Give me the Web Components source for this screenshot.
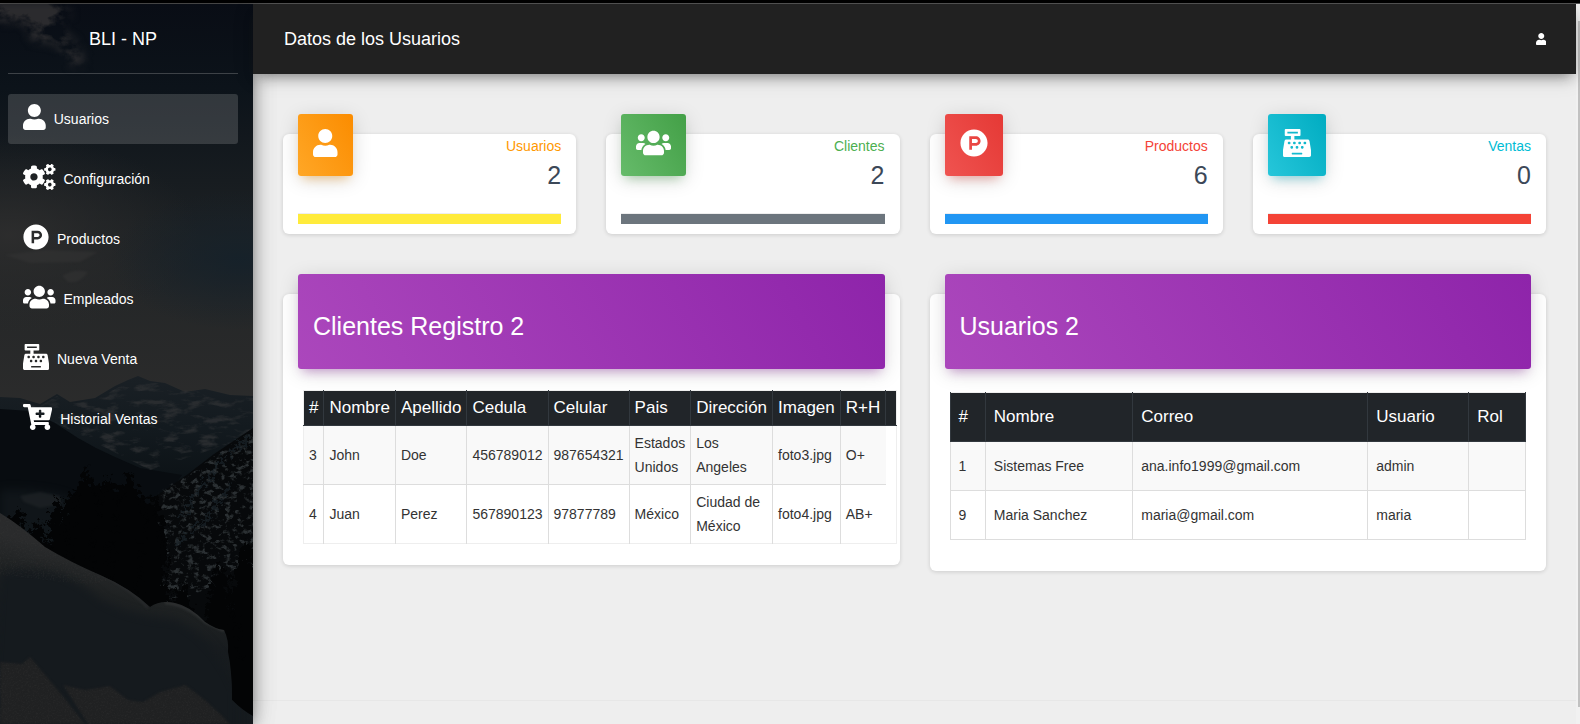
<!DOCTYPE html>
<html lang="es">
<head>
<meta charset="utf-8">
<title>Datos de los Usuarios</title>
<style>
  html, body { margin: 0; }
  body { font-family: "Liberation Sans", Arial, sans-serif; font-size: 14px; background: #eee; color: #333; }
</style>
</head>
<body>
<admin-shell>
  <side-bar slot="side" brand="BLI - NP">
    <nav-link icon="user" active>Usuarios</nav-link>
    <nav-link icon="cogs">Configuración</nav-link>
    <nav-link icon="product">Productos</nav-link>
    <nav-link icon="users">Empleados</nav-link>
    <nav-link icon="register">Nueva Venta</nav-link>
    <nav-link icon="cart">Historial Ventas</nav-link>
  </side-bar>
  <top-bar slot="top">Datos de los Usuarios</top-bar>
  <card-row columns="4">
    <stat-card icon="user" tone="orange" label="Usuarios" bar="#ffeb3b">2</stat-card>
    <stat-card icon="users" tone="green" label="Clientes" bar="#6c757d">2</stat-card>
    <stat-card icon="product" tone="red" label="Productos" bar="#2196f3">6</stat-card>
    <stat-card icon="register" tone="cyan" label="Ventas" bar="#f44336">0</stat-card>
  </card-row>
  <card-row columns="2">
    <panel-card heading="Clientes Registro 2"><clients-table></clients-table></panel-card>
    <panel-card heading="Usuarios 2"><users-table></users-table></panel-card>
  </card-row>
</admin-shell>

<script>
const GEAR = 'M512.1 191l-8.2 14.3c-3 5.3-9.4 7.5-15.1 5.4-11.8-4.4-22.6-10.7-32.1-18.6-4.6-3.8-5.8-10.5-2.8-15.7l8.2-14.3c-6.9-8-12.3-17.3-15.9-27.4h-16.5c-6 0-11.2-4.3-12.2-10.3-2-12-2.1-24.6 0-37.1 1-6 6.2-10.4 12.2-10.4h16.5c3.6-10.1 9-19.4 15.9-27.4l-8.2-14.3c-3-5.2-1.9-11.9 2.8-15.7 9.5-7.9 20.4-14.2 32.1-18.6 5.7-2.1 12.1.1 15.1 5.4l8.2 14.3c10.5-1.9 21.2-1.9 31.7 0L552 6.3c3-5.3 9.4-7.5 15.1-5.4 11.8 4.4 22.6 10.7 32.1 18.6 4.6 3.8 5.8 10.5 2.8 15.7l-8.2 14.3c6.9 8 12.3 17.3 15.9 27.4h16.5c6 0 11.2 4.3 12.2 10.3 2 12 2.1 24.6 0 37.1-1 6-6.2 10.4-12.2 10.4h-16.5c-3.6 10.1-9 19.4-15.9 27.4l8.2 14.3c3 5.2 1.9 11.9-2.8 15.7-9.5 7.9-20.4 14.2-32.1 18.6-5.7 2.1-12.1-.1-15.1-5.4l-8.2-14.3c-10.4 1.9-21.2 1.9-31.7 0zm-10.5-58.8c38.5 29.6 82.4-14.3 52.8-52.8-38.5-29.7-82.4 14.3-52.8 52.8z';
const ICONS = {
  user: [448, '<path d="M224 256c70.7 0 128-57.3 128-128S294.7 0 224 0 96 57.3 96 128s57.3 128 128 128zm89.6 32h-16.7c-22.2 10.2-46.9 16-72.9 16s-50.6-5.8-72.9-16h-16.7C60.2 288 0 348.2 0 422.4V464c0 26.5 21.5 48 48 48h352c26.5 0 48-21.5 48-48v-41.6c0-74.2-60.2-134.4-134.4-134.4z"/>'],
  users: [640, '<path d="M96 224c35.3 0 64-28.7 64-64s-28.7-64-64-64-64 28.7-64 64 28.7 64 64 64zm448 0c35.3 0 64-28.7 64-64s-28.7-64-64-64-64 28.7-64 64 28.7 64 64 64zm32 32h-64c-17.6 0-33.5 7.1-45.1 18.6 40.3 22.1 68.9 62 75.1 109.4h66c17.7 0 32-14.3 32-32v-32c0-35.3-28.7-64-64-64zm-256 0c61.9 0 112-50.1 112-112S381.9 32 320 32 208 82.1 208 144s50.1 112 112 112zm76.8 32h-8.3c-20.8 10-43.9 16-68.5 16s-47.6-6-68.5-16h-8.3C179.6 288 128 339.6 128 403.2V432c0 26.5 21.5 48 48 48h288c26.5 0 48-21.5 48-48v-28.8c0-63.6-51.6-115.2-115.2-115.2zm-223.7-13.4C161.5 263.1 145.6 256 128 256H64c-35.3 0-64 28.7-64 64v32c0 17.7 14.3 32 32 32h65.9c6.3-47.4 34.9-87.3 75.2-109.4z"/>'],
  cogs: [640, `<path d="${GEAR}"/><path transform="translate(0 299)" d="${GEAR}"/><path d="M386.3 286.1l33.7 16.8c10.1 5.8 14.5 18.1 10.5 29.1-8.9 24.2-26.4 46.4-42.6 65.8-7.4 8.9-20.2 11.1-30.3 5.3l-29.1-16.8c-16 13.7-34.6 24.6-54.9 31.7v33.6c0 11.6-8.3 21.6-19.7 23.6-24.6 4.2-50.4 4.4-75.9 0-11.5-2-20-11.9-20-23.6V418c-20.3-7.2-38.9-18-54.9-31.7L74 403c-10 5.8-22.9 3.6-30.3-5.3-16.2-19.4-33.3-41.6-42.2-65.7-4-10.9.4-23.2 10.5-29.1l33.3-16.8c-3.9-20.9-3.9-42.4 0-63.4L12 205.8c-10.1-5.8-14.6-18.1-10.5-29 8.9-24.2 26-46.4 42.2-65.8 7.4-8.9 20.2-11.1 30.3-5.3l29.1 16.8c16-13.7 34.6-24.6 54.9-31.7V57.1c0-11.5 8.2-21.5 19.6-23.5 24.6-4.2 50.5-4.4 76-.1 11.5 2 20 11.9 20 23.6v33.6c20.3 7.2 38.9 18 54.9 31.7l29.1-16.8c10-5.8 22.9-3.6 30.3 5.3 16.2 19.4 33.2 41.6 42.1 65.8 4 10.9.1 23.2-10 29.1l-33.7 16.8c3.9 21 3.9 42.5 0 63.5zm-117.6 21.1c59.2-77-28.7-164.9-105.7-105.7-59.2 77 28.7 164.9 105.7 105.7z"/>`],
  product: [512, '<path d="M326.3 218.8c0 20.5-16.7 37.2-37.2 37.2h-70.3v-74.4h70.3c20.5 0 37.2 16.7 37.2 37.2zM504 256c0 137-111 248-248 248S8 393 8 256 119 8 256 8s248 111 248 248zm-128.1-37.2c0-47.9-38.9-86.8-86.8-86.8H169.2v248h49.6v-74.4h70.3c47.9 0 86.8-38.9 86.8-86.8z"/>'],
  register: [512, '<path d="M511.1 378.8l-26.7-160c-2.6-15.4-15.9-26.7-31.6-26.7H208v-64h96c8.8 0 16-7.2 16-16V16c0-8.8-7.2-16-16-16H48c-8.8 0-16 7.2-16 16v96c0 8.8 7.2 16 16 16h96v64H59.1c-15.6 0-29 11.3-31.6 26.7L.8 378.7c-.6 3.5-.9 7-.9 10.5V480c0 17.7 14.3 32 32 32h448c17.7 0 32-14.3 32-32v-90.7c.1-3.5-.2-7-.8-10.5zM280 248c0-8.8 7.2-16 16-16h16c8.8 0 16 7.2 16 16v16c0 8.8-7.2 16-16 16h-16c-8.8 0-16-7.2-16-16v-16zm-32 64h16c8.8 0 16 7.2 16 16v16c0 8.8-7.2 16-16 16h-16c-8.8 0-16-7.2-16-16v-16c0-8.8 7.2-16 16-16zm-32-80c8.8 0 16 7.2 16 16v16c0 8.8-7.2 16-16 16h-16c-8.8 0-16-7.2-16-16v-16c0-8.8 7.2-16 16-16h16zM80 80V48h192v32H80zm40 200h-16c-8.8 0-16-7.2-16-16v-16c0-8.8 7.2-16 16-16h16c8.8 0 16 7.2 16 16v16c0 8.8-7.2 16-16 16zm16 64v-16c0-8.8 7.2-16 16-16h16c8.8 0 16 7.2 16 16v16c0 8.8-7.2 16-16 16h-16c-8.8 0-16-7.2-16-16zm216 112c0 4.4-3.6 8-8 8H168c-4.4 0-8-3.6-8-8v-16c0-4.4 3.6-8 8-8h176c4.4 0 8 3.6 8 8v16zm24-112c0 8.8-7.2 16-16 16h-16c-8.8 0-16-7.2-16-16v-16c0-8.8 7.2-16 16-16h16c8.8 0 16 7.2 16 16v16zm48-80c0 8.8-7.2 16-16 16h-16c-8.8 0-16-7.2-16-16v-16c0-8.8 7.2-16 16-16h16c8.8 0 16 7.2 16 16v16z"/>'],
  cart: [576, '<path d="M504.717 320H211.572l6.545 32h268.418c15.401 0 26.816 14.301 23.403 29.319l-5.517 24.276C523.112 414.668 536 433.828 536 456c0 31.202-25.519 56.444-56.824 55.994-29.823-.429-54.35-24.631-55.155-54.447-.44-16.287 6.085-31.049 16.803-41.548H231.176C241.553 426.165 248 440.326 248 456c0 31.813-26.528 57.431-58.67 55.938-28.54-1.325-51.751-24.385-53.251-52.917-1.158-22.034 10.436-41.455 28.051-51.586L93.883 64H24C10.745 64 0 53.255 0 40V24C0 10.745 10.745 0 24 0h102.529c11.401 0 21.228 8.021 23.513 19.19L159.208 64H551.99c15.401 0 26.816 14.301 23.403 29.319l-47.273 208C525.637 312.246 515.923 320 504.717 320zM408 168h-48v-40c0-8.837-7.163-16-16-16h-16c-8.837 0-16 7.163-16 16v40h-48c-8.837 0-16 7.163-16 16v16c0 8.837 7.163 16 16 16h48v40c0 8.837 7.163 16 16 16h16c8.837 0 16-7.163 16-16v-40h48c8.837 0 16-7.163 16-16v-16c0-8.837-7.163-16-16-16z"/>']
};
const icon = name => `<svg class="icon" viewBox="0 0 ${ICONS[name][0]} 512" fill="currentColor" aria-hidden="true">${ICONS[name][1]}</svg>`;

// Builds a conifer outline: a jagged triangle from the tip down to its base.
const tree = (x, top, base, half) => {
  const steps = 9, right = [], left = [];
  for (let i = 1; i <= steps; i++) {
    const y = top + (base - top) * i / steps, w = half * Math.pow(i / steps, .7);
    const j = (i * 7 + x) % 5 - 2;
    right.push(`${x + w + j},${y}`, `${x + w * .6},${y - 2}`);
    left.unshift(`${x - w * .6},${y - 2}`, `${x - w + j},${y}`);
  }
  return `<polygon points="${x},${top} ${right.join(' ')} ${left.join(' ')}"/>`;
};

const define = (tag, render) => customElements.define(tag, class extends HTMLElement {
  connectedCallback() {
    if (this.shadowRoot) return;
    this.attachShadow({ mode: 'open' }).innerHTML = render(this);
  }
});

define('admin-shell', () => `
  <style>
    :host { display: flex; flex-direction: column; min-height: 100vh; }
    .strip { height: 3px; background: #000; border-bottom: 1px solid #555; }
    .frame { flex: 1; display: flex; }
    slot[name=side] { display: contents; }
    .page { flex: 1; min-width: 0; display: flex; flex-direction: column; }
    main { flex: 1; display: flex; flex-direction: column; gap: 60px; padding: 60px 30px 0; }
    footer { height: 23px; border-top: 1px solid #e7e7e7; }
    .track { width: 4px; background: #f1f1f1; display: flex; flex-direction: column; box-sizing: border-box; padding: 17px 0 17px 2px; }
    .thumb { flex: 1; background: #c1c1c1; }
  </style>
  <div class="strip"></div>
  <div class="frame">
    <slot name="side"></slot>
    <div class="page">
      <slot name="top"></slot>
      <main><slot></slot></main>
      <footer></footer>
    </div>
    <div class="track"><div class="thumb"></div></div>
  </div>`);

define('side-bar', el => `
  <style>
    :host { display: block; position: relative; z-index: 3; width: 253px; flex: none; background: #111; color: #fff;
      box-shadow: 0 10px 30px -12px rgba(0,0,0,.42), 0 4px 25px 0 rgba(0,0,0,.12), 0 8px 10px -5px rgba(0,0,0,.2), 0 0 14px rgba(0,0,0,.25); }
    .scene { position: absolute; inset: 0; width: 100%; height: 100%; }
    .scene filter { color-interpolation-filters: sRGB; }
    .content { position: relative; padding: 0 15px 0 8px; }
    .brand { border-bottom: 1px solid rgba(180,180,180,.3); text-align: center; font-size: 18px; line-height: 30px; padding: 20px 0 19px; }
    nav { display: flex; flex-direction: column; gap: 10px; padding-top: 20px; }
  </style>
  <svg class="scene" viewBox="0 4 253 720" preserveAspectRatio="xMidYMid slice" aria-hidden="true">
    <defs>
      <linearGradient id="sky" x1="0" y1="0" x2="0" y2="1">
        <stop offset="0" stop-color="#090d15"/><stop offset=".2" stop-color="#0c131a"/><stop offset=".42" stop-color="#171c20"/>
        <stop offset=".7" stop-color="#252728"/><stop offset="1" stop-color="#2c2c2c"/>
      </linearGradient>
      <radialGradient id="warm"><stop offset="0" stop-color="#2e2e2e" stop-opacity=".9"/><stop offset="1" stop-color="#2a2a2a" stop-opacity="0"/></radialGradient>
      <radialGradient id="cool"><stop offset="0" stop-color="#15212a" stop-opacity=".9"/><stop offset="1" stop-color="#15212a" stop-opacity="0"/></radialGradient>
      <linearGradient id="hill" gradientUnits="userSpaceOnUse" x1="90" y1="555" x2="50" y2="724"><stop offset="0" stop-color="#2a2b2c"/><stop offset=".2" stop-color="#1e2122"/><stop offset=".35" stop-color="#181c1f"/><stop offset="1" stop-color="#13191d"/></linearGradient>
      <linearGradient id="range" gradientUnits="userSpaceOnUse" x1="0" y1="376" x2="0" y2="480"><stop offset="0" stop-color="#1a2025"/><stop offset=".5" stop-color="#131a1f"/><stop offset="1" stop-color="#0c1216"/></linearGradient>
      <filter id="soft" x="-50%" y="-50%" width="200%" height="200%"><feGaussianBlur stdDeviation="5"/></filter>
      <filter id="edge"><feGaussianBlur stdDeviation="1"/></filter>
      <filter id="cloud" x="-20%" y="-20%" width="140%" height="140%"><feGaussianBlur in="SourceGraphic" stdDeviation="5" result="m"/><feTurbulence type="fractalNoise" baseFrequency=".04 .05" numOctaves="5" seed="8"/><feColorMatrix values="0 0 0 0 .17  0 0 0 0 .17  0 0 0 0 .18  4.5 0 0 0 -1.6"/><feComposite in2="m" operator="in"/></filter>
      <filter id="rock" x="0" y="0" width="1" height="1"><feTurbulence type="fractalNoise" baseFrequency=".16 .2" numOctaves="5" seed="5" result="n"/><feColorMatrix values="0 0 0 0 .17  0 0 0 0 .19  0 0 0 0 .2  5 0 0 0 -2.6"/><feComposite in2="SourceGraphic" operator="in"/></filter>
      <filter id="ridge" x="0" y="0" width="1" height="1"><feTurbulence type="fractalNoise" baseFrequency=".05 .13" numOctaves="5" seed="11"/><feColorMatrix values="0 0 0 0 .18  0 0 0 0 .19  0 0 0 0 .2  4 0 0 0 -2"/><feComposite in2="SourceGraphic" operator="in"/></filter>
      <filter id="ragged" x="-10%" y="-10%" width="120%" height="120%"><feTurbulence type="fractalNoise" baseFrequency=".18" numOctaves="3" seed="3"/><feDisplacementMap in="SourceGraphic" scale="20" xChannelSelector="R" yChannelSelector="G"/></filter>
      <filter id="grain" x="0" y="0" width="1" height="1"><feTurbulence type="fractalNoise" baseFrequency=".6" numOctaves="2"/><feColorMatrix values="0 0 0 0 .22  0 0 0 0 .22  0 0 0 0 .22  2 0 0 0 -.9"/><feComposite in2="SourceGraphic" operator="in"/></filter>
      <path id="hillshape" d="M0 513Q20 525 45 547Q70 562 100 575Q130 588 150 607Q160 600 175 603Q190 606 205 622Q215 629 224 630Q229 640 228 652Q232 670 232 700Q242 710 253 716V724H0Z"/>
      <clipPath id="hillclip"><use href="#hillshape"/></clipPath>
    </defs>
    <rect y="4" width="253" height="420" fill="url(#sky)"/>
    <ellipse cx="10" cy="235" rx="190" ry="100" fill="url(#warm)"/>
    <ellipse cx="240" cy="260" rx="130" ry="70" fill="url(#cool)"/>
    <path d="M-10 0H55L72 14L58 26L74 40L86 62L72 66L56 44L30 40L26 24L-10 20Z" filter="url(#cloud)"/>
    <path d="M5 255L45 250L98 252L80 262L30 263ZM62 276Q75 268 88 272Q80 284 68 282Z" fill="#353535" opacity=".5" filter="url(#edge)"/>
    <path d="M0 397L20 398L40 404L57 394L70 402L95 398L115 386L128 380L138 376L150 381L165 383L185 392L205 389L230 395L253 396V560H0Z" fill="url(#range)"/>
    <path d="M0 398L40 406L57 396L70 404L95 400L128 382L138 378L165 385L205 391L253 398V436L150 470L90 440L30 410Z" filter="url(#ridge)" opacity=".8"/>
    <path d="M0 409L30 411L55 423L78 438L96 448L115 457L140 468L182 475L150 520H0Z" fill="#080c10"/>
    <path d="M0 490Q60 488 80 505V570H0Z" fill="#12181c" opacity=".8" filter="url(#soft)"/>
    <path d="M20 496L40 492L60 496L62 504L40 508L24 502Z" fill="#1f2326" opacity=".7" filter="url(#edge)"/>
    <path d="M253 428L232 442L214 454L188 474L168 488L150 500V724H253Z" fill="#07090b"/>
    <path d="M253 430L232 444L214 456L188 476L158 490L155 610L253 570Z" filter="url(#rock)"/>
    <path d="M251 436L220 462L195 495L180 520M232 485L205 520L175 545" stroke="#1a2329" stroke-width="3" fill="none" opacity=".7" filter="url(#ragged)"/>
    <g fill="#030405" filter="url(#ragged)">
      <path d="M64 500L90 484L130 488L160 510L168 545L160 612L60 575Z"/>
      ${tree(86, 464, 600, 30)}${tree(108, 476, 600, 30)}${tree(130, 470, 610, 34)}${tree(57, 496, 560, 14)}${tree(17, 508, 555, 16)}${tree(38, 520, 560, 16)}${tree(152, 494, 606, 22)}
      ${tree(246, 540, 730, 44)}${tree(219, 562, 660, 26)}${tree(182, 583, 630, 18)}
    </g>
    <use href="#hillshape" fill="url(#hill)"/>
    <g clip-path="url(#hillclip)">
      <path d="M0 572Q60 560 100 600Q130 618 175 620Q215 640 236 690V740H-10Z" fill="#151a1e" filter="url(#soft)"/>
      <path d="M98 573Q130 588 148 608" stroke="#292b2d" stroke-width="2" fill="none" filter="url(#edge)"/>
      <path d="M165 603Q186 604 205 622L224 631" stroke="#333536" stroke-width="2" fill="none" filter="url(#edge)"/>
      <path d="M0 662L22 664L30 657L58 690L85 724H0ZM63 685L85 690L110 686L128 700L143 702L160 692L185 685Q205 698 230 724H88Z" fill="#202122" filter="url(#edge)"/>
      <path d="M0 662L22 664L30 657L58 690L85 724H0ZM63 685L85 690L110 686L128 700L143 702L160 692L185 685Q205 698 230 724H88ZM0 510L45 545L110 580L90 585L0 575Z" filter="url(#grain)" opacity=".4"/>
    </g>
  </svg>
  <div class="content">
    <div class="brand">${el.getAttribute('brand')}</div>
    <nav><slot></slot></nav>
  </div>`);

define('nav-link', el => `
  <style>
    :host { display: block; }
    a { display: flex; align-items: center; gap: 8px; height: 50px; box-sizing: border-box; padding: 0 15px 4px; border-radius: 3px; color: #fff; text-decoration: none; font-size: 14px; }
    :host([active]) a { background: rgba(200,200,200,.2); }
    .icon { height: 26px; flex: none; }
    span { padding-top: 4px; }
  </style>
  <a href="#"${el.hasAttribute('active') ? ' aria-current="page"' : ''}>${icon(el.getAttribute('icon'))}<span><slot></slot></span></a>`);

define('top-bar', () => `
  <style>
    :host { display: block; position: relative; z-index: 4; }
    header { display: flex; align-items: center; justify-content: space-between; height: 70px; padding: 0 30px 0 31px; background: #212121; color: #fff;
      box-shadow: 0 4px 20px 0 rgba(0,0,0,.14), 0 7px 12px -5px rgba(33,33,33,.46); }
    h1 { margin: 0; font-size: 18px; font-weight: 400; line-height: 30px; }
    button { display: flex; padding: 0; border: 0; background: none; color: inherit; }
    .icon { height: 12px; }
  </style>
  <header><h1><slot></slot></h1><button type="button" aria-label="Cuenta">${icon('user')}</button></header>`);

define('card-row', el => `
  <style>
    :host { display: grid; grid-template-columns: repeat(${el.getAttribute('columns')}, minmax(0, 1fr)); gap: 30px; align-items: start; }
  </style>
  <slot></slot>`);

const TONES = {
  orange: ['#ffa726', '#fb8c00', '#ff9800', '255,152,0'],
  green: ['#66bb6a', '#43a047', '#4caf50', '76,175,80'],
  red: ['#ef5350', '#e53935', '#f44336', '244,67,54'],
  cyan: ['#26c6da', '#00acc1', '#00bcd4', '0,188,212']
};
define('stat-card', el => {
  const [from, to, text, glow] = TONES[el.getAttribute('tone')];
  return `
  <style>
    :host { display: block; background: #fff; border-radius: 6px; box-shadow: 0 1px 4px rgba(0,0,0,.14); padding: 0 15px 10px; }
    .top { display: flex; justify-content: space-between; align-items: flex-start; }
    .badge { margin-top: -20px; padding: 15px 15px 19px; display: flex; border-radius: 3px; color: #fff; background: linear-gradient(60deg, ${from}, ${to});
      box-shadow: 0 4px 20px 0 rgba(0,0,0,.14), 0 7px 10px -5px rgba(${glow},.4); }
    .icon { height: 28px; }
    .text { text-align: right; padding: 2px 0 20px; }
    p { margin: 0; color: ${text}; font-size: 14px; line-height: 21px; }
    h2 { margin: 0; color: #3c4858; font-size: 25px; font-weight: 400; line-height: 36px; }
    .bar { height: 10px; border-top: 1px solid #eee; background: ${el.getAttribute('bar')}; }
  </style>
  <div class="top"><div class="badge">${icon(el.getAttribute('icon'))}</div><div class="text"><p>${el.getAttribute('label')}</p><h2><slot></slot></h2></div></div>
  <div class="bar"></div>`;
});

define('panel-card', el => `
  <style>
    :host { display: block; background: #fff; border-radius: 6px; box-shadow: 0 1px 4px rgba(0,0,0,.14); }
    header { display: flow-root; margin: -20px 15px 0; padding: 35px 15px 25px; border-radius: 3px; color: #fff; background: linear-gradient(60deg, #ab47bc, #8e24aa);
      box-shadow: 0 4px 20px 0 rgba(0,0,0,.14), 0 7px 10px -5px rgba(156,39,176,.4); }
    h2 { margin: 0; font-size: 25px; font-weight: 400; line-height: 35px; }
  </style>
  <header><h2>${el.getAttribute('heading')}</h2></header>
  <slot></slot>`);

const rows = list => list.map(r => `<tr>${r.map(c => `<td>${c}</td>`).join('')}</tr>`).join('');
const head = list => `<thead><tr>${list.map(c => `<th scope="col">${c}</th>`).join('')}</tr></thead>`;
const TABLE_CSS = `
    table { border-collapse: collapse; width: 100%; font-size: 14px; line-height: 24px; color: #333; }
    th { background: #212529; color: #fff; font-size: 17px; font-weight: 400; text-align: left; border-left: 1px solid #32383e; border-bottom: 1px solid #32383e; }
    td { border-left: 1px solid #ddd; border-top: 1px solid #ddd; }
    tbody tr:first-child td { background: #f9f9f9; }`;

define('clients-table', () => `
  <style>
    :host { display: block; padding: 21px 3px 21px 20px; overflow-x: auto; }
    ${TABLE_CSS}
    table { border: 1px solid #eee; }
    th, td { padding: 5px; }
    th:first-child, td:first-child { border-left: 0; }
  </style>
  <table>${head(['#', 'Nombre', 'Apellido', 'Cedula', 'Celular', 'Pais', 'Dirección', 'Imagen', 'R+H', ''])}
  <tbody>${rows([
    ['3', 'John', 'Doe', '456789012', '987654321', 'Estados Unidos', 'Los Angeles', 'foto3.jpg', 'O+'],
    ['4', 'Juan', 'Perez', '567890123', '97877789', 'México', 'Ciudad de México', 'foto4.jpg', 'AB+']
  ])}</tbody></table>`);

define('users-table', () => `
  <style>
    :host { display: block; padding: 23px 20px 31px; }
    ${TABLE_CSS}
    table { border-top: 1px solid #eee; }
    th, td { padding: 12px 8px; }
    th:last-child { border-right: 1px solid #32383e; }
    td:last-child { border-right: 1px solid #ddd; }
    tr:last-child td { border-bottom: 1px solid #ddd; }
  </style>
  <table>${head(['#', 'Nombre', 'Correo', 'Usuario', 'Rol'])}
  <tbody>${rows([
    ['1', 'Sistemas Free', 'ana.info1999@gmail.com', 'admin', ''],
    ['9', 'Maria Sanchez', 'maria@gmail.com', 'maria', '']
  ])}</tbody></table>`);
</script>
</body>
</html>
